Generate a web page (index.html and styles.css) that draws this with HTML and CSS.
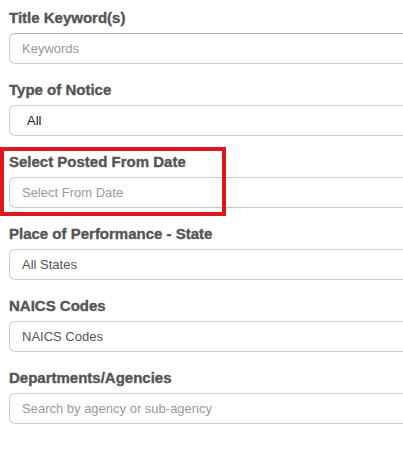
FILE: index.html
```html
<!DOCTYPE html>
<html>
<head>
<meta charset="utf-8">
<link rel="stylesheet" href="styles.css">
</head>
<body>
<form class="filters">
  <div class="field">
    <label class="field-label">Title Keyword(s)</label>
    <input class="field-input field-input--first" type="text" placeholder="Keywords">
  </div>
  <div class="field">
    <label class="field-label">Type of Notice</label>
    <div class="field-input field-select field-select--dark">All</div>
  </div>
  <div class="field field--highlight">
    <label class="field-label">Select Posted From Date</label>
    <input class="field-input" type="text" placeholder="Select From Date">
  </div>
  <div class="field">
    <label class="field-label">Place of Performance - State</label>
    <div class="field-input field-select">All States</div>
  </div>
  <div class="field">
    <label class="field-label">NAICS Codes</label>
    <div class="field-input field-select">NAICS Codes</div>
  </div>
  <div class="field">
    <label class="field-label">Departments/Agencies</label>
    <input class="field-input" type="text" placeholder="Search by agency or sub-agency">
  </div>
</form>
</body>
</html>
```
FILE: styles.css
```css
html, body {
  margin: 0;
  padding: 0;
  background: #ffffff;
  overflow: hidden;
}

body {
  font-family: "Liberation Sans", Arial, sans-serif;
}

.filters {
  display: flex;
  flex-direction: column;
  gap: 17px;
  padding: 9px 0 0 9px;
}

.field {
  display: flex;
  flex-direction: column;
  gap: 6px;
  position: relative;
}

.field-label {
  font-size: 15px;
  line-height: 18px;
  font-weight: 700;
  color: #555555;
  -webkit-text-stroke: 0.35px #555555;
  white-space: nowrap;
}

.field-input {
  box-sizing: border-box;
  width: 100%;
  height: 31px;
  margin: 0;
  padding: 0 12px;
  border: 1px solid #cccccc;
  border-right: none;
  border-radius: 6px 0 0 6px;
  background: #ffffff;
  font-family: "Liberation Sans", Arial, sans-serif;
  font-size: 13px;
  color: #555555;
  outline: none;
}

.field-input::placeholder {
  color: #9a9a9a;
  opacity: 1;
}

.field-input--first {
  border-color: #aaaaaa #cccccc #cccccc #cccccc;
}

.field-select {
  display: flex;
  align-items: center;
  padding-left: 12px;
}

.field-select--dark {
  color: #222222;
  padding-left: 17px;
}

.field--highlight::after {
  content: "";
  position: absolute;
  left: -9px;
  top: -6px;
  width: 226px;
  height: 69px;
  box-sizing: border-box;
  border: 4px solid #e2161f;
  pointer-events: none;
}
```
